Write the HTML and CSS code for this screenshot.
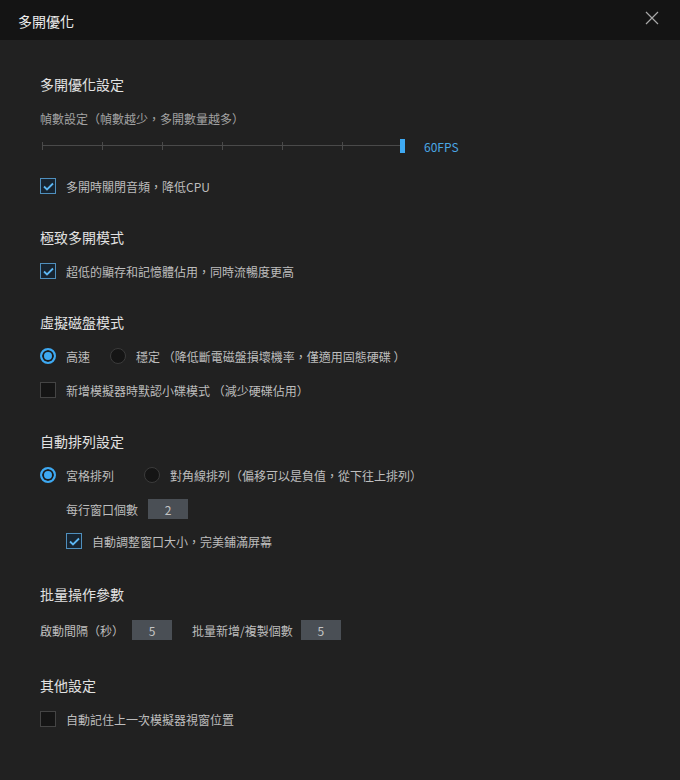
FILE: index.html
```html
<!DOCTYPE html>
<html lang="zh-Hant">
<head>
<meta charset="utf-8">
<title>多開優化</title>
<link rel="stylesheet" href="styles.css">
</head>
<body>
<div class="dialog">
  <header class="titlebar">
    <span class="title">多開優化</span>
    <svg class="close" width="14" height="14" viewBox="0 0 14 14"><path d="M1 1 L13 13 M13 1 L1 13" stroke="#a8a8a8" stroke-width="1.2" fill="none"/></svg>
  </header>
  <main class="content">
    <section class="section">
      <h2 class="heading">多開優化設定</h2>
      <div class="row subtle">幀數設定（幀數越少，多開數量越多）</div>
      <div class="slider-row">
        <div class="slider">
          <span class="tick"></span><span class="tick"></span><span class="tick"></span><span class="tick"></span><span class="tick"></span><span class="tick"></span><span class="tick"></span>
          <span class="thumb"></span>
        </div>
        <span class="fps">60FPS</span>
      </div>
      <label class="row">
        <span class="check on"><svg width="11" height="9" viewBox="0 0 11 9"><path d="M1 4.5 L4 7.5 L10 1.5" stroke="#5cb6f2" stroke-width="1.8" fill="none"/></svg></span>
        <span class="label">多開時關閉音頻，降低CPU</span>
      </label>
    </section>

    <section class="section">
      <h2 class="heading">極致多開模式</h2>
      <label class="row">
        <span class="check on"><svg width="11" height="9" viewBox="0 0 11 9"><path d="M1 4.5 L4 7.5 L10 1.5" stroke="#5cb6f2" stroke-width="1.8" fill="none"/></svg></span>
        <span class="label">超低的顯存和記憶體佔用，同時流暢度更高</span>
      </label>
    </section>

    <section class="section">
      <h2 class="heading">虛擬磁盤模式</h2>
      <div class="row">
        <span class="radio on"></span><span class="label">高速</span>
        <span class="radio gap20"></span><span class="label">穩定 （降低斷電磁盤損壞機率，僅適用固態硬碟 ）</span>
      </div>
      <label class="row">
        <span class="check"></span>
        <span class="label">新增模擬器時默認小碟模式 （減少硬碟佔用）</span>
      </label>
    </section>

    <section class="section">
      <h2 class="heading">自動排列設定</h2>
      <div class="row">
        <span class="radio on"></span><span class="label">宮格排列</span>
        <span class="radio gap30"></span><span class="label">對角線排列（偏移可以是負值，從下往上排列）</span>
      </div>
      <div class="row indent">
        <span class="label">每行窗口個數</span>
        <span class="num">2</span>
      </div>
      <label class="row indent tight">
        <span class="check on"><svg width="11" height="9" viewBox="0 0 11 9"><path d="M1 4.5 L4 7.5 L10 1.5" stroke="#5cb6f2" stroke-width="1.8" fill="none"/></svg></span>
        <span class="label">自動調整窗口大小，完美鋪滿屏幕</span>
      </label>
    </section>

    <section class="section batch">
      <h2 class="heading">批量操作參數</h2>
      <div class="row">
        <span class="label plain">啟動間隔（秒）</span>
        <span class="num w8">5</span>
        <span class="label plain after">批量新增/複製個數</span>
        <span class="num w8">5</span>
      </div>
    </section>

    <section class="section">
      <h2 class="heading">其他設定</h2>
      <label class="row">
        <span class="check"></span>
        <span class="label">自動記住上一次模擬器視窗位置</span>
      </label>
    </section>
  </main>
</div>
</body>
</html>
```

FILE: styles.css
```css
* { box-sizing: border-box; }
html, body {
  margin: 0;
  padding: 0;
  background: #212121;
}
body {
  font-family: "Noto Sans CJK TC", "Noto Sans", sans-serif;
  color: #bdbdbd;
  font-size: 12px;
  min-height: 780px;
}
.dialog {
  min-height: 780px;
  background: #212121;
}
.titlebar {
  height: 40px;
  background: #141414;
  display: flex;
  align-items: center;
  justify-content: space-between;
  padding: 0 21px 0 18px;
}
.title {
  font-size: 14px;
  color: #ececec;
  line-height: 20px;
  margin-top: 1px;
}
.close {
  margin-top: -5px;
}
.content {
  padding: 34px 40px 20px 40px;
}
.section {
  margin-bottom: 24px;
}
.section.batch {
  margin-bottom: 28px;
}
.section.batch .heading {
  margin-bottom: 9px;
}
.heading {
  margin: 0 0 7px 0;
  font-size: 14px;
  font-weight: normal;
  line-height: 20px;
  color: #e2e2e2;
}
.row {
  height: 34px;
  display: flex;
  align-items: center;
}
.row.indent {
  padding-left: 26px;
}
.row.tight {
  padding-bottom: 4px;
}
.subtle {
  color: #a3a3a3;
}
.label {
  margin-left: 10px;
  white-space: nowrap;
}
.label.plain {
  margin-left: 0;
}
.label.after {
  margin-left: 20px;
}
.indent > .label:first-child {
  margin-left: 0;
}
.slider-row {
  height: 22px;
  margin-bottom: 12px;
  display: flex;
  align-items: center;
}
.slider {
  position: relative;
  width: 361px;
  height: 8px;
  margin-left: 2px;
  display: flex;
  justify-content: space-between;
}
.slider::before {
  content: "";
  position: absolute;
  left: 0;
  right: 0;
  top: 3px;
  height: 1px;
  background: #4a4a4a;
}
.tick {
  width: 1px;
  height: 8px;
  background: #4a4a4a;
}
.thumb {
  position: absolute;
  right: -2px;
  top: -3px;
  width: 5px;
  height: 14px;
  background: #3ea9f2;
}
.fps {
  margin-left: 21px;
  color: #4aa6e4;
}
.check {
  width: 16px;
  height: 16px;
  flex: none;
  border: 1px solid #444;
  background: #151515;
  display: flex;
  align-items: center;
  justify-content: center;
}
.check.on {
  border-color: #4f8fbd;
  background: #172430;
}
.radio {
  width: 16px;
  height: 16px;
  flex: none;
  border-radius: 50%;
  border: 1px solid #3b3b3b;
  background: #151515;
}
.radio.on {
  border: 2px solid #3ea9f2;
  background: #3ea9f2;
  box-shadow: inset 0 0 0 2px #1b1b1b;
}
.radio.gap20 { margin-left: 20px; }
.radio.gap30 { margin-left: 30px; }
.num {
  width: 40px;
  height: 20px;
  margin-left: 10px;
  background: #4a4f55;
  color: #c4c4c4;
  display: flex;
  align-items: center;
  justify-content: center;
  font-size: 12px;
  flex: none;
}
.num.w8 {
  margin-left: 8px;
}
```
